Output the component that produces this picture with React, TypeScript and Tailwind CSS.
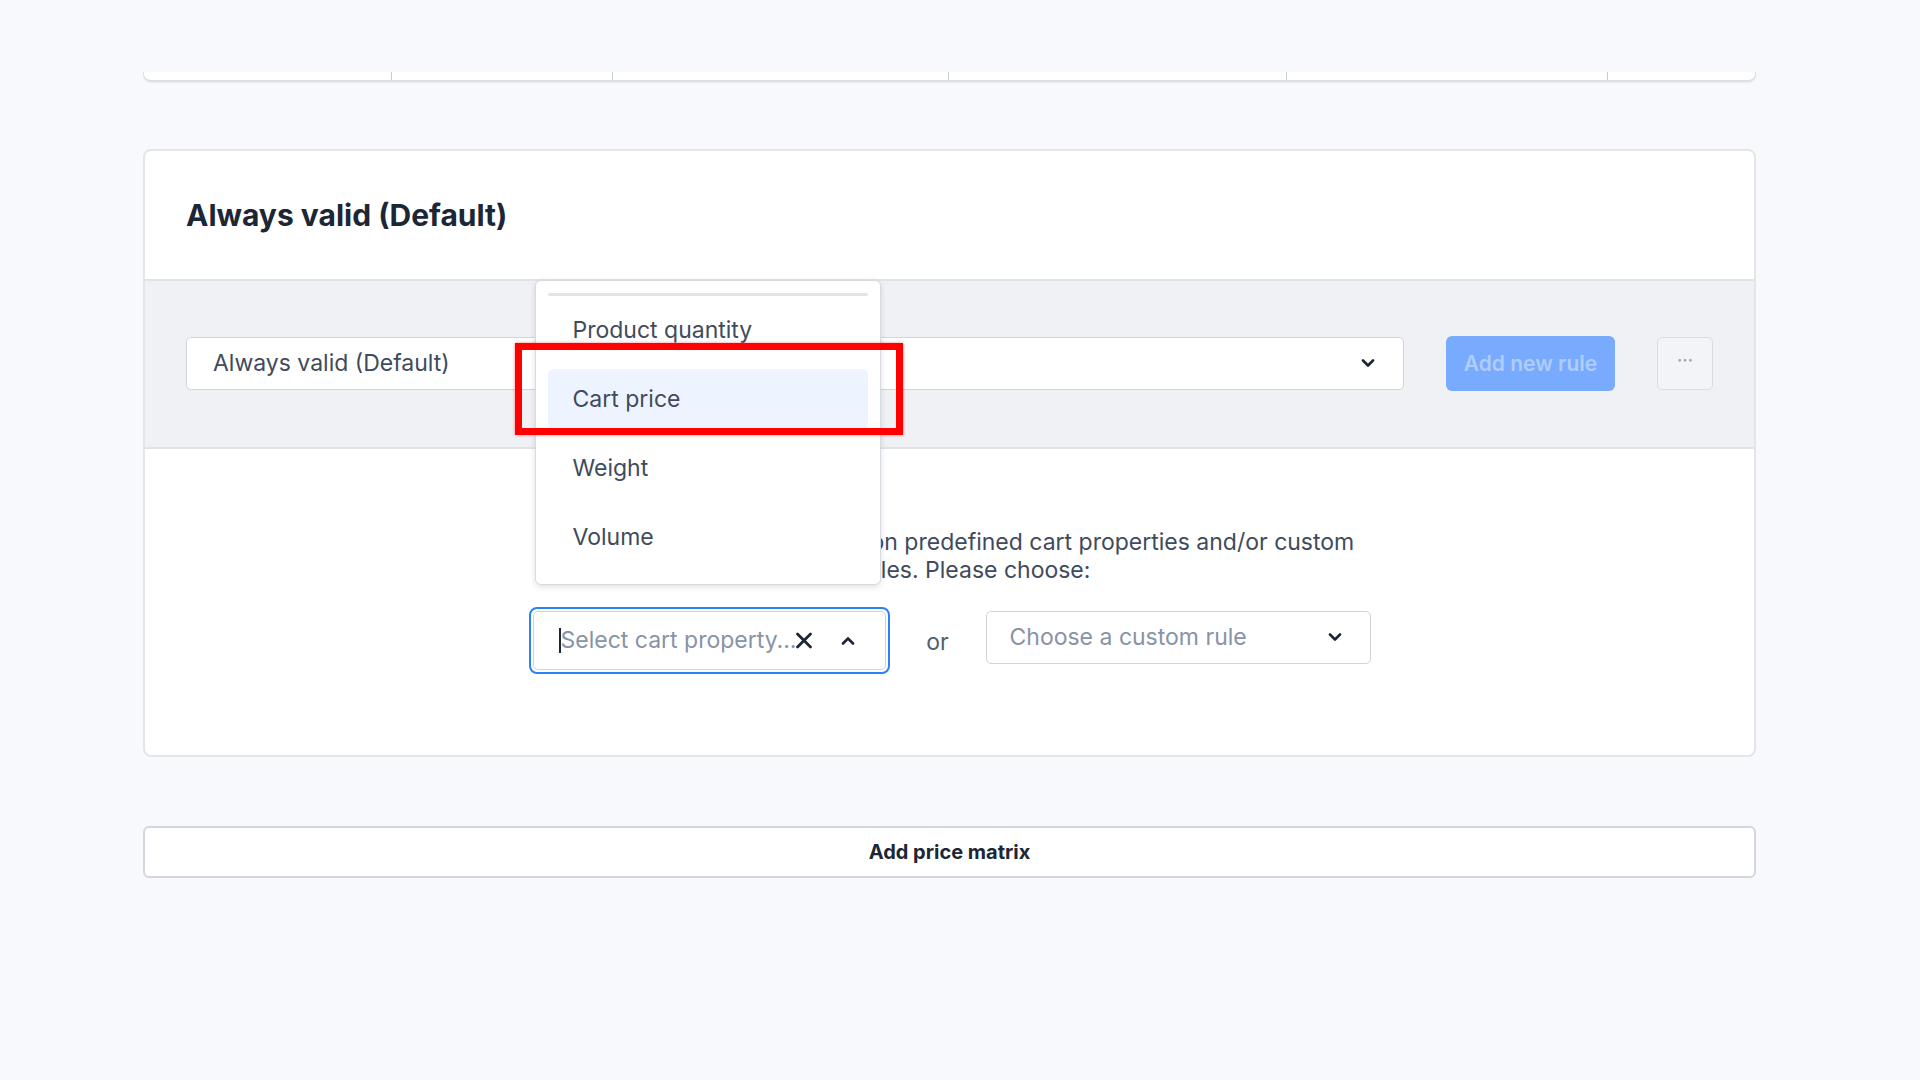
import { ChevronDown } from "lucide-react";

const columns = [248, 221, 336, 338, 321];

const options = ["Product quantity", "Cart price", "Weight", "Volume"];

function Chevron({ up = false }: { up?: boolean }) {
    return (
        <svg width="14" height="9" viewBox="0 0 14 9" className="text-[#1c2635]">
            <path
                d={up ? "M2 7.5 L7 2.5 L12 7.5" : "M2 1.5 L7 6.5 L12 1.5"}
                fill="none"
                stroke="currentColor"
                strokeWidth="2.6"
                strokeLinecap="round"
                strokeLinejoin="round"
            />
        </svg>
    );
}

function PropertySelect() {
    return (
        <div className="relative w-[361px] h-[67px] rounded-[8px] border-2 border-[#2b82f6] p-[2px]">
            {/* Open option list */}
            <div className="absolute left-[4px] bottom-[calc(100%+24px)] w-[346px] bg-white border border-[#d6dae1] rounded-[6px] shadow-[0_2px_6px_rgba(0,0,0,0.12)] px-[12px] pt-[12px] pb-[17px] z-10">
                <div className="h-[3px] bg-[#e2e4e9] rounded-full" />
                <div className="mt-[4px] flex flex-col gap-[9px]">
                    {options.map((opt) => (
                        <div
                            key={opt}
                            className={`h-[60px] flex items-center pl-[25px] rounded-[6px] text-[23px] text-[#3f4b5c] ${opt === "Cart price" ? "bg-[#eef4ff]" : ""}`}
                        >
                            {opt}
                        </div>
                    ))}
                </div>
                {/* highlight marker */}
                <div className="absolute left-[-21px] top-[62px] w-[388px] h-[92px] border-[7px] border-[#ff0000] shadow-[0_0_3px_rgba(255,0,0,0.5)] pointer-events-none" />
            </div>

            <div className="h-full bg-white border border-[#cfd4db] rounded-[5px] flex items-center pl-[25px]">
                <span className="w-[2px] h-[25px] bg-[#1c2635]" />
                <span className="w-[234px] text-[23px] text-[#8893a6] whitespace-nowrap">Select cart property...</span>
                <svg width="18" height="17" viewBox="0 0 18 17" className="text-[#1c2635]">
                    <path d="M2.5 2 L15.5 15 M15.5 2 L2.5 15" stroke="currentColor" strokeWidth="2.8" strokeLinecap="round" />
                </svg>
                <span className="ml-[28px]">
                    <Chevron up />
                </span>
            </div>
        </div>
    );
}

export default function App() {
    return (
        <div className="min-h-screen bg-[#f8f9fc] pt-[72px] font-['Inter',sans-serif]">
            <div className="ml-[143px] w-[1613px]">
                {/* bottom edge of the grid above */}
                <div className="h-[10px] bg-white border-x border-b-2 border-[#dcdfe5] rounded-b-[8px] flex shadow-[0_1px_2px_rgba(0,0,0,0.06)]">
                    {columns.map((w, i) => (
                        <div key={i} className="h-full border-r border-[#c9cdd4]" style={{ width: w }} />
                    ))}
                </div>

                {/* Price matrix card */}
                <div className="mt-[67px] bg-white border-2 border-[#e3e5ea] rounded-[8px]">
                    <div className="h-[128px] flex items-center px-[41px]">
                        <h2 className="text-[30px] font-bold text-[#1c2635]">Always valid (Default)</h2>
                    </div>

                    <div className="bg-[#f0f1f5] border-y-2 border-[#e0e3e8] pt-[55px] pb-[56px] px-[41px] flex items-center">
                        <div className="flex-1 h-[53px] bg-white border border-[#d1d5dc] rounded-[5px] flex items-center justify-between pl-[26px] pr-[28px]">
                            <span className="text-[23px] text-[#3f4b5c]">Always valid (Default)</span>
                            <Chevron />
                        </div>
                        <button className="ml-[42px] w-[169px] h-[55px] rounded-[6px] bg-[#78aafd] text-[21px] font-semibold text-[#b0cdff]">
                            Add new rule
                        </button>
                        <button className="ml-[42px] w-[56px] h-[53px] rounded-[5px] border border-[#d8dce3] bg-[#f3f4f7] text-[#a0a7b3] text-[16px] font-bold leading-none pb-[8px]">
                            ···
                        </button>
                    </div>

                    <div className="pt-[79px] pb-[81px] flex flex-col items-center">
                        <p className="ml-[50px] w-[860px] text-center text-[23px] leading-[28px] text-[#3f4b5c]">
                            The prices can be based on predefined cart properties and/or custom
                            <br />
                            rules. Please choose:
                        </p>
                        <div className="mt-[23px] flex items-start">
                            <PropertySelect />
                            <span className="w-[96px] h-[67px] flex items-center justify-center text-[23px] text-[#52606d] pt-[4px]">or</span>
                            <div className="mt-[4px] w-[385px] h-[53px] bg-white border border-[#cfd4db] rounded-[5px] flex items-center justify-between pl-[23px] pr-[28px]">
                                <span className="text-[23px] text-[#8893a6]">Choose a custom rule</span>
                                <Chevron />
                            </div>
                        </div>
                    </div>
                </div>

                <button className="mt-[69px] w-full h-[52px] bg-white border-2 border-[#d3d6dc] rounded-[6px] text-[20px] font-bold text-[#1c2635]">
                    Add price matrix
                </button>
            </div>
        </div>
    );
}
